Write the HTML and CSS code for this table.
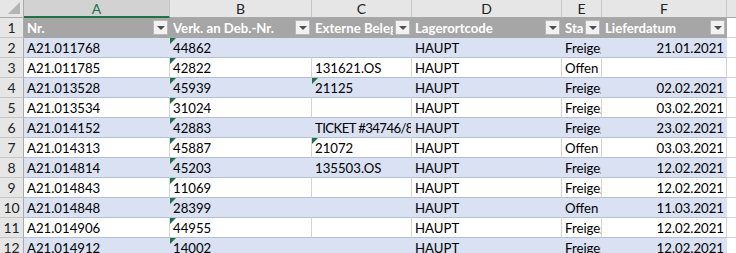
FILE: index.html
```html
<!DOCTYPE html>
<html>
<head>
<meta charset="utf-8">
<link rel="stylesheet" href="styles.css">
</head>
<body>
<div class="sheet">
  <div class="colhead corner"><span class="corner-tri"></span></div>
  <div class="colhead sel">A</div>
  <div class="colhead">B</div>
  <div class="colhead">C</div>
  <div class="colhead">D</div>
  <div class="colhead">E</div>
  <div class="colhead">F</div>
  <div class="colhead"></div>

  <div class="rowhead">1</div>
  <div class="th"><span class="tht">Nr.</span><span class="fb"></span></div>
  <div class="th"><span class="tht">Verk. an Deb.-Nr.</span><span class="fb"></span></div>
  <div class="th"><span class="tht">Externe Belegnummer</span><span class="fb"></span></div>
  <div class="th"><span class="tht">Lagerortcode</span><span class="fb"></span></div>
  <div class="th"><span class="tht">Status</span><span class="fb"></span></div>
  <div class="th"><span class="tht">Lieferdatum</span><span class="fb"></span></div>
  <div class="c plain"></div>

  <div class="rowhead">2</div>
  <div class="c b">A21.011768</div><div class="c b t">44862</div><div class="c b"></div><div class="c b">HAUPT</div><div class="c b">Freigegeben</div><div class="c b r">21.01.2021</div><div class="c plain"></div>
  <div class="rowhead">3</div>
  <div class="c">A21.011785</div><div class="c t">42822</div><div class="c">131621.OS</div><div class="c">HAUPT</div><div class="c">Offen</div><div class="c r"></div><div class="c plain"></div>
  <div class="rowhead">4</div>
  <div class="c b">A21.013528</div><div class="c b t">45939</div><div class="c b t">21125</div><div class="c b">HAUPT</div><div class="c b">Freigegeben</div><div class="c b r">02.02.2021</div><div class="c plain"></div>
  <div class="rowhead">5</div>
  <div class="c">A21.013534</div><div class="c t">31024</div><div class="c"></div><div class="c">HAUPT</div><div class="c">Freigegeben</div><div class="c r">03.02.2021</div><div class="c plain"></div>
  <div class="rowhead">6</div>
  <div class="c b">A21.014152</div><div class="c b t">42883</div><div class="c b tight">TICKET #34746/8</div><div class="c b">HAUPT</div><div class="c b">Freigegeben</div><div class="c b r">23.02.2021</div><div class="c plain"></div>
  <div class="rowhead">7</div>
  <div class="c">A21.014313</div><div class="c t">45887</div><div class="c t">21072</div><div class="c">HAUPT</div><div class="c">Offen</div><div class="c r">03.03.2021</div><div class="c plain"></div>
  <div class="rowhead">8</div>
  <div class="c b">A21.014814</div><div class="c b t">45203</div><div class="c b">135503.OS</div><div class="c b">HAUPT</div><div class="c b">Freigegeben</div><div class="c b r">12.02.2021</div><div class="c plain"></div>
  <div class="rowhead">9</div>
  <div class="c">A21.014843</div><div class="c t">11069</div><div class="c"></div><div class="c">HAUPT</div><div class="c">Freigegeben</div><div class="c r">12.02.2021</div><div class="c plain"></div>
  <div class="rowhead">10</div>
  <div class="c b">A21.014848</div><div class="c b t">28399</div><div class="c b"></div><div class="c b">HAUPT</div><div class="c b">Offen</div><div class="c b r">11.03.2021</div><div class="c plain"></div>
  <div class="rowhead">11</div>
  <div class="c">A21.014906</div><div class="c t">44955</div><div class="c"></div><div class="c">HAUPT</div><div class="c">Freigegeben</div><div class="c r">12.02.2021</div><div class="c plain"></div>
  <div class="rowhead">12</div>
  <div class="c b">A21.014912</div><div class="c b t">14002</div><div class="c b"></div><div class="c b">HAUPT</div><div class="c b">Freigegeben</div><div class="c b r">12.02.2021</div><div class="c plain"></div>
</div>
</body>
</html>
```
FILE: styles.css
```css
html, body {
  margin: 0;
  padding: 0;
  background: #ffffff;
  overflow: hidden;
}
.sheet {
  display: grid;
  grid-template-columns: 24px 146px 142px 100px 150px 40px 125px 40px;
  grid-auto-rows: 20px;
  grid-template-rows: 18px;
  font-family: Lato, "Liberation Sans", sans-serif;
  font-size: 13.2px;
  color: #000;
  width: 767px;
}
.colhead {
  background: #e6e6e6;
  border-right: 1px solid #c6c6c6;
  border-bottom: 1px solid #aaaaaa;
  color: #222;
  font-size: 14px;
  display: flex;
  align-items: center;
  justify-content: center;
  box-sizing: border-box;
}
.colhead.sel {
  background: #d2d2d2;
  color: #217346;
  border-bottom: 2px solid #217346;
}
.corner {
  position: relative;
  border-right: 1px solid #aaaaaa;
}
.corner-tri {
  position: absolute;
  right: 3px;
  bottom: 3px;
  width: 0;
  height: 0;
  border-left: 12px solid transparent;
  border-bottom: 12px solid #b4b4b4;
}
.rowhead {
  background: #e6e6e6;
  border-right: 1px solid #aaaaaa;
  border-bottom: 1px solid #c6c6c6;
  box-sizing: border-box;
  display: flex;
  align-items: center;
  justify-content: center;
  font-size: 14px;
  color: #222;
}
.th {
  position: relative;
  background: #a6a6a6;
  color: #ffffff;
  font-weight: bold;
  border-bottom: 1px solid #a6a6a6;
  box-sizing: border-box;
  padding-left: 3px;
  padding-right: 19px;
  display: flex;
  align-items: center;
  white-space: nowrap;
  overflow: hidden;
}
.tht {
  overflow: hidden;
  min-width: 0;
}
.fb {
  position: absolute;
  right: 2px;
  top: 2px;
  width: 15px;
  height: 15px;
  box-sizing: border-box;
  border: 1px solid #b8b8b8;
  background: #f2f2f2;
}
.fb::after {
  content: "";
  position: absolute;
  left: 3px;
  top: 5px;
  width: 0;
  height: 0;
  border-left: 4px solid transparent;
  border-right: 4px solid transparent;
  border-top: 4px solid #505050;
}
.c {
  position: relative;
  box-sizing: border-box;
  border-right: 1px solid #d4d4d4;
  border-bottom: 1px solid #b4bfd3;
  padding-left: 3px;
  padding-right: 2px;
  display: flex;
  align-items: center;
  white-space: nowrap;
  overflow: hidden;
  background: #ffffff;
}
.c.tight {
  letter-spacing: -0.6px;
  padding-left: 3px;
  padding-right: 0;
}
.c.b {
  background: #d9e1f2;
  border-right-color: #d9e1f2;
}
.c.r {
  justify-content: flex-end;
}
.c.plain {
  border-bottom-color: #d4d4d4;
}
.c.t::before {
  content: "";
  position: absolute;
  left: 0;
  top: 0;
  width: 0;
  height: 0;
  border-top: 6px solid #1e7145;
  border-right: 6px solid transparent;
}
```
